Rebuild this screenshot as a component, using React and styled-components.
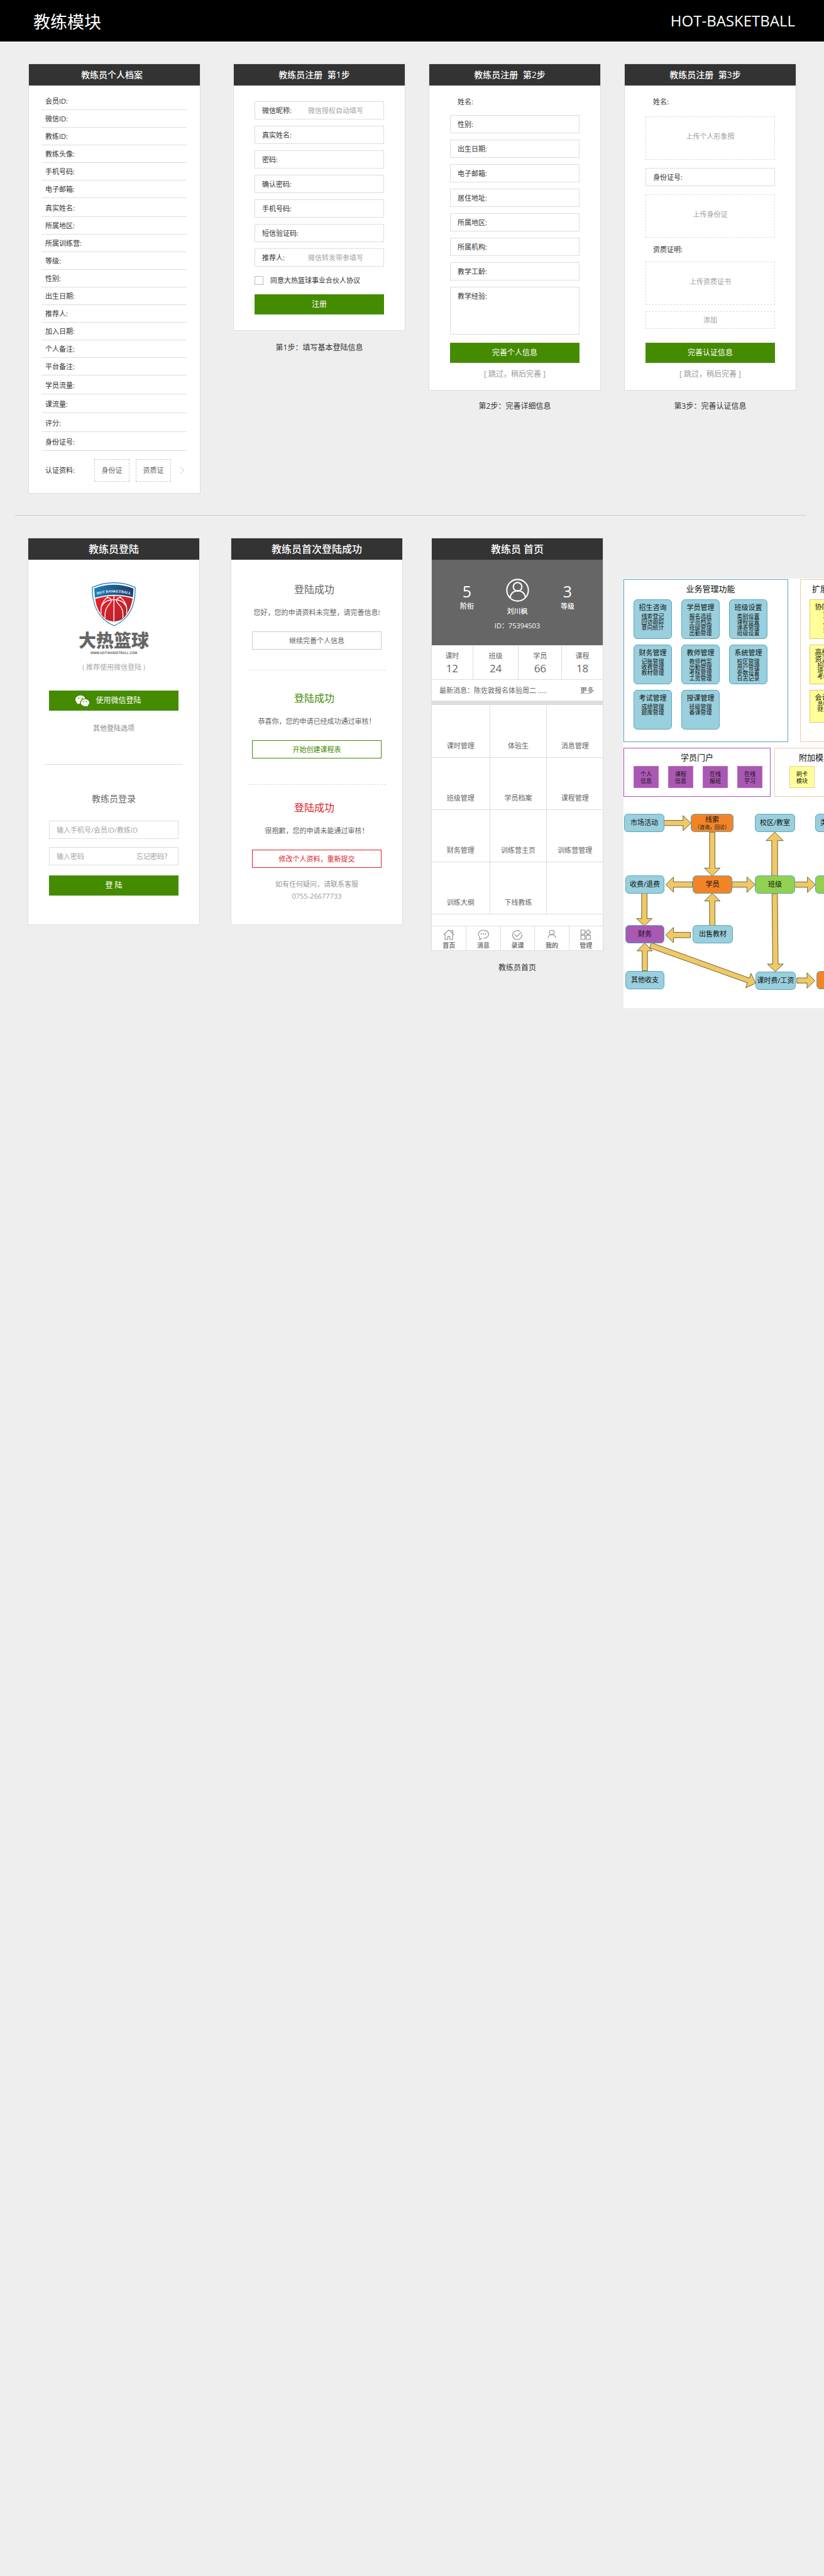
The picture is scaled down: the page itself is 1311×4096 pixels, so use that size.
import React from "react";
import styled, { createGlobalStyle, css } from "styled-components";
import { BsWechat } from "react-icons/bs";

const color = {
  page: "#eeeeee",
  line: "#dddddd",
  dark: "#333333",
  mid: "#666666",
  soft: "#999999",
  green: "#458b00",
  red: "#dd2229",
  teal: "#9acfdd",
  tealLine: "#58a8bd",
  purple: "#a958b3",
  yellow: "#feff99",
  orange: "#f28427",
  lime: "#92d14f",
};

const GlobalStyle = createGlobalStyle`
  *, *::before, *::after { box-sizing: border-box; }
  html, body { margin: 0; background: ${color.page}; }
  body {
    font-family: "Open Sans", "Noto Sans CJK SC", sans-serif;
    font-size: 11px;
    line-height: 16px;
    color: ${color.dark};
  }
  h1, h2, h3, p, ul, figure { margin: 0; padding: 0; font-weight: 400; }
  ul { list-style: none; }
  button, input, textarea { font: inherit; color: inherit; }
`;

const Page = styled.div`
  min-height: 100vh;
  overflow: hidden;
`;

const TopBar = styled.header`
  display: flex;
  justify-content: space-between;
  align-items: center;
  height: 66px;
  padding: 0 46px 0 53px;
  background: #000;
  color: #fff;
`;

const ModuleTitle = styled.h1`
  padding-top: 3px;
  font-size: 27px;
  line-height: 36px;
`;

const Brand = styled.span`
  font-size: 24px;
  line-height: 32px;
`;

const StepRow = styled.main`
  display: flex;
  align-items: flex-start;
  gap: 37px;
  padding: 35px 44px 0 45px;
`;

const Column = styled.figure`
  flex: 1 1 0;
  min-width: 0;
  margin-right: ${(p) => p.$after || 0}px;
`;

const Card = styled.section`
  background: #fff;
  border: 1px solid ${color.line};
`;

const CardHead = styled.h2`
  height: 34px;
  padding-right: ${(p) => p.$end || 0}px;
  background: ${color.dark};
  color: #fff;
  font-size: ${(p) => (p.$large ? 16 : 14)}px;
  font-weight: 500;
  line-height: 34px;
  text-align: center;
  white-space: pre;
`;

const Caption = styled.figcaption`
  margin-top: ${(p) => p.$gap || 17}px;
  font-size: 12px;
  line-height: 16px;
  text-align: center;
`;

/* ---------- profile card ---------- */

const Profile = styled.div`
  padding: 9px 21px 18px 20px;
`;

const ProfileRow = styled.label`
  display: flex;
  align-items: flex-end;
  height: ${(p) => (p.$tall ? 30 : 28)}px;
  padding: 0 0 5px 6px;
  border-bottom: 1px solid ${color.line};
`;

const BareInput = styled.input`
  flex: 1;
  min-width: 0;
  height: 16px;
  padding: 0;
  border: 0;
  outline: 0;
  background: transparent;
  &::placeholder {
    color: #a5a5a5;
    opacity: 1;
  }
`;

const Papers = styled.div`
  display: flex;
  align-items: center;
  gap: 10px;
  padding: 13px 4px 0 6px;
`;

const PapersLabel = styled.span`
  width: 68px;
`;

const PaperButton = styled.button`
  width: 56px;
  height: 36px;
  padding: 0;
  border: 1px dashed #c9c9dc;
  background: #fff;
  color: ${color.mid};
`;

const MoreButton = styled.button`
  display: flex;
  margin-left: auto;
  padding: 0;
  border: 0;
  background: none;
`;

/* ---------- forms ---------- */

const Form = styled.form`
  display: flex;
  flex-direction: column;
  gap: 10px;
  padding: ${(p) => p.$top}px 33px ${(p) => p.$bottom}px;
`;

const Field = styled.label`
  display: flex;
  align-items: center;
  height: 29px;
  padding: 0 11px;
  border: 1px solid ${color.line};
`;

const PlainField = styled(Field)`
  height: 18px;
  margin-bottom: ${(p) => p.$below || 0}px;
  border-color: transparent;
`;

const FieldName = styled.span`
  min-width: 73px;
`;

const AreaField = styled.label`
  display: flex;
  height: 76px;
  padding: 6px 11px;
  border: 1px solid ${color.line};
`;

const Area = styled.textarea`
  flex: 1;
  min-width: 0;
  padding: 0;
  border: 0;
  outline: 0;
  resize: none;
  background: transparent;
`;

const Agree = styled.label`
  display: flex;
  align-items: center;
  gap: 11px;
  margin-top: 4px;
`;

const Tick = styled.input`
  appearance: none;
  width: 14px;
  height: 14px;
  margin: 0;
  border: 1px solid #bbb;
  background: #fff;
  &:checked {
    background: ${color.green};
  }
`;

const PrimaryButton = styled.button`
  display: flex;
  align-items: center;
  justify-content: center;
  gap: 10px;
  width: 100%;
  height: 32px;
  margin-top: ${(p) => p.$gap || 0}px;
  padding: 0 ${(p) => p.$end || 0}px 0 0;
  border: 0;
  background: ${color.green};
  color: #fff;
  font-size: 12px;
`;

const Skip = styled.a`
  align-self: center;
  color: ${color.soft};
  font-size: 12px;
  text-decoration: none;
`;

const Upload = styled.button`
  height: ${(p) => (p.$small ? 28 : 69)}px;
  margin: ${(p) => p.$above || 0}px 0 ${(p) => p.$below || 0}px;
  padding: 0 0 ${(p) => (p.$small ? 0 : 5)}px;
  border: 1px dashed ${color.line};
  background: #fff;
  color: #a0a0a0;
`;

const Rule = styled.hr`
  height: 1px;
  margin: 34px 29px 35px 24px;
  border: 0;
  background: #cccccc;
`;

/* ---------- second row ---------- */

const ScreenRow = styled.div`
  display: flex;
  align-items: flex-start;
  padding-left: 44px;
`;

const Screen = styled.figure`
  flex: 274 1 0;
  min-width: 0;
  margin-right: ${(p) => p.$after}px;
`;

const Login = styled.div`
  display: flex;
  flex-direction: column;
  align-items: center;
  height: 580px;
  padding: 36px 33px 0;
`;

const Wordmark = styled.strong`
  margin-top: 5px;
  color: ${color.mid};
  font-size: 28px;
  font-weight: 900;
  line-height: 34px;
`;

const Site = styled.span`
  margin-top: -1px;
  color: ${color.mid};
  font-family: "Liberation Sans", sans-serif;
  font-size: 5px;
  font-weight: 700;
  line-height: 8px;
`;

const Tip = styled.p`
  margin-top: 11px;
  color: #aaa;
`;

const OtherLink = styled.a`
  margin-top: 20px;
  color: #8c8c8c;
  text-decoration: none;
`;

const Divider = styled.hr`
  align-self: stretch;
  margin: ${(p) => p.$top}px -7px ${(p) => p.$bottom}px;
  border: 0;
  border-top: 1px ${(p) => (p.$dashed ? "dashed" : "solid")} ${color.line};
`;

const LoginTitle = styled.h3`
  color: ${color.mid};
  font-size: 14px;
  line-height: 20px;
`;

const LoginBox = styled.div`
  display: flex;
  align-items: center;
  align-self: stretch;
  height: 29px;
  margin-top: ${(p) => p.$gap}px;
  padding: 0 11px;
  border: 1px solid ${color.line};
  a {
    color: #a0a0a0;
    text-decoration: none;
  }
`;

const Results = styled.div`
  display: flex;
  flex-direction: column;
  align-items: center;
  height: 580px;
  padding: 35px 33px 0;
  color: ${color.mid};
`;

const ResultTitle = styled.h3`
  padding-right: 8px;
  color: ${(p) => p.$tone};
  font-size: 16px;
  line-height: 24px;
`;

const ResultText = styled.p`
  margin: 17px 0 22px;
  white-space: nowrap;
`;

const OutlineButton = styled.button`
  width: 100%;
  height: 29px;
  padding: 0;
  border: 1px solid ${(p) => p.$edge || p.$tone};
  background: #fff;
  color: ${(p) => p.$tone};
`;

const Help = styled.p`
  margin-top: 16px;
  color: ${color.soft};
  line-height: 19px;
  text-align: center;
`;

/* ---------- home screen ---------- */

const Hero = styled.div`
  display: grid;
  grid-template-columns: repeat(3, 80px);
  justify-content: center;
  height: 136px;
  padding-top: 30px;
  background: ${color.mid};
  color: #fff;
  text-align: center;
`;

const Rank = styled.div`
  padding-top: 4px;
  font-weight: 500;
  strong {
    display: block;
    font-size: 25px;
    font-weight: 500;
    line-height: 32px;
  }
`;

const Person = styled.div`
  display: flex;
  flex-direction: column;
  align-items: center;
  gap: 7px;
  white-space: nowrap;
  svg {
    display: block;
  }
`;

const PersonName = styled.span`
  font-weight: 500;
`;

const Stats = styled.ul`
  display: grid;
  grid-template-columns: 65fr 73fr 69fr 66fr;
  border-bottom: 1px solid ${color.line};
`;

const Stat = styled.li`
  height: 54px;
  padding-top: 9px;
  color: ${color.mid};
  text-align: center;
  & + & {
    border-left: 1px solid ${color.line};
  }
  strong {
    display: block;
    font-size: 17px;
    font-weight: 500;
    line-height: 24px;
  }
`;

const News = styled.div`
  display: flex;
  justify-content: space-between;
  align-items: center;
  height: 33px;
  padding: 0 14px 0 12px;
  color: ${color.mid};
  a {
    color: inherit;
    text-decoration: none;
  }
`;

const MenuGrid = styled.ul`
  display: grid;
  grid-template-columns: 93fr 91fr 89fr;
  margin-bottom: 18px;
  padding-top: 1px;
  border-top: 7px solid ${color.line};
`;

const MenuCell = styled.li`
  display: flex;
  align-items: flex-end;
  justify-content: center;
  height: 83px;
  padding-bottom: 10px;
  border-bottom: 1px solid ${color.line};
  border-right: ${(p) => (p.$last ? "0" : `1px solid ${color.line}`)};
  color: ${color.mid};
`;

const TabBar = styled.nav`
  display: grid;
  grid-template-columns: repeat(5, 1fr);
  height: 39px;
  border-top: 1px solid ${color.line};
`;

const Tab = styled.a`
  display: flex;
  flex-direction: column;
  align-items: center;
  gap: 1px;
  padding-top: 5px;
  color: #777;
  font-size: 10px;
  font-weight: 700;
  line-height: 14px;
  text-decoration: none;
  & + & {
    border-left: 1px solid ${color.line};
  }
  svg {
    display: block;
    fill: none;
    stroke: #8c8c8c;
    stroke-width: 1.7;
  }
`;

/* ---------- system map ---------- */

const SystemMap = styled.section`
  flex: 319 1 0;
  min-width: 0;
  margin-top: 65px;
  padding-top: 1px;
  overflow: hidden;
  background: #fff;
  color: #111;
`;

const PanelRow = styled.div`
  display: flex;
  margin-bottom: ${(p) => p.$below || 0}px;
`;

const Panel = styled.div`
  flex: none;
  width: ${(p) => p.$w}px;
  height: ${(p) => p.$h}px;
  margin-right: ${(p) => p.$after || 0}px;
  padding: 6px 0 0 ${(p) => p.$inset}px;
  border: 1px solid ${(p) => p.$edge};
`;

const PanelTitle = styled.h3`
  padding-right: ${(p) => p.$end || 0}px;
  font-size: 13px;
  line-height: 16px;
  text-align: center;
`;

const Modules = styled.div`
  display: grid;
  grid-template-columns: repeat(3, 61px);
  gap: 9px 15px;
  margin-top: 9px;
`;

const Extras = styled.div`
  display: flex;
  flex-direction: column;
  gap: 9px;
  margin-top: 9px;
`;

const ModuleBox = styled.div`
  width: 61px;
  height: ${(p) => p.$h || 63}px;
  padding-top: 5px;
  border: 1px solid ${(p) => (p.$yellow ? "#e6c56c" : color.tealLine)};
  border-radius: ${(p) => (p.$yellow ? 0 : 6)}px;
  background: ${(p) => (p.$yellow ? color.yellow : color.teal)};
  text-align: center;
  h4 {
    margin: 0 0 ${(p) => (p.$yellow ? 0 : 3)}px;
    font-size: 11px;
    font-weight: 400;
    line-height: ${(p) => (p.$yellow ? 11 : 13)}px;
  }
  p {
    font-size: 9px;
    line-height: 9px;
  }
`;

const Chips = styled.div`
  display: flex;
  gap: 15px;
  margin-top: 6px;
`;

const Chip = styled.div`
  display: flex;
  flex-direction: column;
  justify-content: center;
  width: 40px;
  height: 35px;
  border: 1px solid ${(p) => (p.$yellow ? "#efcf9a" : "#b46ebd")};
  background: ${(p) => (p.$yellow ? color.yellow : color.purple)};
  font-size: 9px;
  line-height: 11px;
  text-align: center;
`;

const Flow = styled.div`
  position: relative;
  height: 336px;
  svg {
    display: block;
  }
`;

const Node = styled.div`
  position: absolute;
  left: ${(p) => p.$x}px;
  top: ${(p) => p.$y}px;
  display: flex;
  flex-direction: column;
  align-items: center;
  justify-content: center;
  width: ${(p) => p.$w || 64}px;
  height: 29px;
  padding-bottom: 1px;
  border: 1px solid ${color.tealLine};
  border-radius: 6px;
  background: ${(p) => p.$bg || color.teal};
  line-height: 12px;
  white-space: nowrap;
  ${(p) =>
    p.$start &&
    css`
      align-items: flex-start;
      padding-left: 7px;
    `}
  small {
    font-size: 8px;
    line-height: 11px;
  }
`;

const profileRows = [
  ["会员ID:", true],
  ["微信ID:"],
  ["教练ID:"],
  ["教练头像:"],
  ["手机号码:"],
  ["电子邮箱:"],
  ["真实姓名:", true],
  ["所属地区:"],
  ["所属训练营:"],
  ["等级:"],
  ["性别:"],
  ["出生日期:"],
  ["推荐人:"],
  ["加入日期:"],
  ["个人备注:"],
  ["平台备注:"],
  ["学员流量:", true],
  ["课流量:", true],
  ["评分:", true],
  ["身份证号:", true],
];

const stepOne = [
  ["微信昵称:", "微信授权自动填写"],
  ["真实姓名:"],
  ["密码:", "", "password"],
  ["确认密码:", "", "password"],
  ["手机号码:"],
  ["短信验证码:"],
  ["推荐人:", "微信转发带参填写"],
];

const stepTwo = ["性别:", "出生日期:", "电子邮箱:", "居住地址:", "所属地区:", "所属机构:", "教学工龄:"];

const menu = [
  "课时管理", "体验生", "消息管理",
  "班级管理", "学员档案", "课程管理",
  "财务管理", "训练营主页", "训练营管理",
  "训练大纲", "下线教练", "",
];

const modules = [
  ["招生咨询", ["线索登记", "回访跟踪", "意向统计"]],
  ["学员管理", ["报名选班", "学员档案", "班级管理", "出勤管理"]],
  ["班级设置", ["类别设置", "课程设置", "课表管理", "班级设置"]],
  ["财务管理", ["记账管理", "收费管理", "教材管理"]],
  ["教师管理", ["教师档案", "出勤管理", "考核管理", "工资管理"]],
  ["系统管理", ["校区管理", "用户管理", "参数设置", "日志记录"]],
  ["考试管理", ["成绩管理", "题库管理"]],
  ["授课管理", ["班级管理", "备课管理"]],
];

const arrows = [
  "M352 152H485V118L540 171L485 224V188H352Z",
  "M670 234H708V485H744L689 540L634 485H670Z",
  "M551 581H418V548L364 600L418 654V619H551Z",
  "M828 581H932V547L988 600L932 655V619H828Z",
  "M1105 538V293H1066L1126 233L1186 293H1146V538Z",
  "M1265 582H1355V547L1410 601L1355 655V619H1265Z",
  "M195 662V838H160L214 890L268 838H233V662Z",
  "M670 886V715H635L689 661L744 715H708V886Z",
  "M536 934H418V900L363 953L418 1007V972H536Z",
  "M199 1203V1064H163L217 1009L271 1064H236V1203Z",
  "M264 1007L949 1254L960 1221L993 1290L923 1322L935 1287L252 1043Z",
  "M1107 664L1112 1156H1075L1131 1209L1186 1156H1150L1145 664Z",
  "M1280 1253H1352V1217L1407 1272L1352 1325V1289H1280Z",
];

function Shield() {
  return (
    <svg width="70" height="70" viewBox="196 49 306 308" role="img" aria-label="HOT BASKETBALL">
      <defs>
        <linearGradient id="band" x1="0" x2="1">
          <stop offset="0" stopColor="#1b7fb8" />
          <stop offset="1" stopColor="#1f3f6b" />
        </linearGradient>
        <linearGradient id="ball" x1="0" x2="1" y2="1">
          <stop offset="0" stopColor="#ee1f28" />
          <stop offset="1" stopColor="#a9262c" />
        </linearGradient>
        <path id="arc" d="M222 138Q350 100 478 138" />
      </defs>
      <path
        d="M199 84Q270 52 350 52Q430 52 499 84C502 190 470 300 350 353C230 300 196 190 199 84Z"
        fill="#fff"
        stroke="#0f75b5"
        strokeWidth="5"
      />
      <path d="M212 92Q280 66 350 66Q420 66 487 92L483 152Q350 118 217 157Z" fill="url(#band)" />
      <path d="M219 166Q350 124 481 162C470 225 445 278 405 309Q350 338 295 309C252 275 228 225 219 166Z" fill="url(#ball)" />
      <g fill="none" stroke="#fff" strokeWidth="6">
        <path d="M350 140V325" />
        <path d="M300 158C330 150 340 178 322 196C296 222 282 250 288 300" />
        <path d="M400 158C370 150 360 178 378 196C406 222 418 250 412 300" />
        <path d="M310 148C272 178 252 215 262 268" />
        <path d="M390 148C428 178 448 215 438 268" />
        <path d="M262 222C275 190 300 170 350 170C400 170 425 190 438 222" />
      </g>
      <text fill="#fff" fontSize="26" fontWeight="700" fontFamily="Liberation Serif, serif" textAnchor="middle">
        <textPath href="#arc" startOffset="50%">HOT BASKETBALL</textPath>
      </text>
    </svg>
  );
}

const tabs = [
  ["首页", <path key="a" d="M1 13L13.5 1L26 13M18 2.500H23.500V10M4.500 12V24H11V17H16V24H23V12" />],
  ["消息", (
    <g key="b">
      <path d="M5 18.500A12.500 10 0 1 1 13.500 21.500M5 18L4.500 25L10.500 21.500" />
      <path d="M7.500 11h2M12.500 11h2M17.500 11h2" strokeWidth="3.500" />
    </g>
  )],
  ["录课", <path key="c" d="M20 4.500A11.300 11 0 1 0 24.500 11M7 12L12 17L24 6" />],
  ["我的", (
    <g key="d">
      <ellipse cx="13.500" cy="7" rx="6.300" ry="5.500" />
      <path d="M4 21C5 9.500 22 9.500 23 21" />
    </g>
  )],
  ["管理", <path key="e" d="M1.500 1.500H11.500V11H1.500ZM1.500 14H11.500V24H1.500ZM14.500 14H24.500V24H14.500ZM19.500 .5L25.500 6.500L19.500 12.500L13.500 6.500Z" />],
];

function Avatar() {
  return (
    <svg width="37" height="37" viewBox="0 0 54 54" fill="none" stroke="#fff" strokeWidth="3">
      <circle cx="27" cy="27" r="25" />
      <circle cx="27" cy="19" r="10" />
      <path d="M10 45A17.500 17 0 0 1 45 45" />
    </svg>
  );
}

function Entry({ name, hint, type }) {
  return (
    <Field>
      <FieldName>{name}</FieldName>
      <BareInput type={type || "text"} placeholder={hint} />
    </Field>
  );
}

function NameEntry() {
  return (
    <PlainField $below={2}>
      <FieldName>姓名:</FieldName>
      <BareInput />
    </PlainField>
  );
}

function Module({ title, items, ...rest }) {
  return (
    <ModuleBox {...rest}>
      {[].concat(title).map((t) => <h4 key={t}>{t}</h4>)}
      {items.map((item) => <p key={item}>{item}</p>)}
    </ModuleBox>
  );
}

function Steps() {
  return (
    <StepRow>
      <Column $after={15}>
        <Card>
          <CardHead $end={8}>教练员个人档案</CardHead>
          <Profile>
            {profileRows.map(([name, tall]) => (
              <ProfileRow key={name} $tall={tall}>
                <span>{name}</span>
                <BareInput />
              </ProfileRow>
            ))}
            <Papers>
              <PapersLabel>认证资料:</PapersLabel>
              <PaperButton type="button">身份证</PaperButton>
              <PaperButton type="button">资质证</PaperButton>
              <MoreButton type="button" aria-label="更多资料">
                <svg width="7" height="12" viewBox="0 0 7 12" fill="none" stroke="#c4c4c4">
                  <path d="M.5 .5L6.500 6L.5 11.500" />
                </svg>
              </MoreButton>
            </Papers>
          </Profile>
        </Card>
      </Column>

      <Column>
        <Card>
          <CardHead $end={16}>{"教练员注册  第1步"}</CardHead>
          <Form $top={25} $bottom={25}>
            {stepOne.map(([name, hint, type]) => (
              <Entry key={name} name={name} hint={hint} type={type} />
            ))}
            <Agree>
              <Tick type="checkbox" />
              同意大热篮球事业合伙人协议
            </Agree>
            <PrimaryButton type="button" $gap={4}>注册</PrimaryButton>
          </Form>
        </Card>
        <Caption $gap={19}>第1步：填写基本登陆信息</Caption>
      </Column>

      <Column>
        <Card>
          <CardHead $end={16}>{"教练员注册  第2步"}</CardHead>
          <Form $top={17} $bottom={17}>
            <NameEntry />
            {stepTwo.map((name) => <Entry key={name} name={name} />)}
            <AreaField>
              <FieldName>教学经验:</FieldName>
              <Area />
            </AreaField>
            <PrimaryButton type="button" $gap={3}>完善个人信息</PrimaryButton>
            <Skip href="#skip">[ 跳过，稍后完善 ]</Skip>
          </Form>
        </Card>
        <Caption>第2步：完善详细信息</Caption>
      </Column>

      <Column>
        <Card>
          <CardHead $end={16}>{"教练员注册  第3步"}</CardHead>
          <Form $top={17} $bottom={17}>
            <NameEntry />
            <Upload type="button" $above={2} $below={3}>上传个人形象照</Upload>
            <Entry name="身份证号:" />
            <Upload type="button" $above={3}>上传身份证</Upload>
            <PlainField as="div">资质证明:</PlainField>
            <Upload type="button">上传资质证书</Upload>
            <Upload type="button" $small $below={12}>添加</Upload>
            <PrimaryButton type="button">完善认证信息</PrimaryButton>
            <Skip href="#skip">[ 跳过，稍后完善 ]</Skip>
          </Form>
        </Card>
        <Caption>第3步：完善认证信息</Caption>
      </Column>
    </StepRow>
  );
}

function LoginScreen() {
  return (
    <Screen $after={49}>
      <Card>
        <CardHead $large>教练员登陆</CardHead>
        <Login>
          <Shield />
          <Wordmark>大热篮球</Wordmark>
          <Site>WWW.HOT-BASKETBALL.COM</Site>
          <Tip>( 推荐使用微信登陆 )</Tip>
          <PrimaryButton type="button" $gap={29} $end={17}>
            <BsWechat size={22} />
            使用微信登陆
          </PrimaryButton>
          <OtherLink href="#other">其他登陆选项</OtherLink>
          <Divider $top={49} $bottom={44} />
          <LoginTitle>教练员登录</LoginTitle>
          <LoginBox $gap={25}>
            <BareInput aria-label="账号" placeholder="输入手机号/会员ID/教练ID" />
          </LoginBox>
          <LoginBox $gap={13}>
            <BareInput type="password" aria-label="密码" placeholder="输入密码" />
            <a href="#forgot">忘记密码？</a>
          </LoginBox>
          <PrimaryButton type="button" $gap={16}>登 陆</PrimaryButton>
        </Login>
      </Card>
    </Screen>
  );
}

function ResultScreen() {
  return (
    <Screen $after={45}>
      <Card>
        <CardHead $large>教练员首次登陆成功</CardHead>
        <Results>
          <ResultTitle $tone={color.mid}>登陆成功</ResultTitle>
          <ResultText>您好，您的申请资料未完整，请完善信息!</ResultText>
          <OutlineButton $tone={color.mid} $edge="#cccccc">继续完善个人信息</OutlineButton>
          <Divider $dashed $top={32} $bottom={32} />
          <ResultTitle $tone={color.green}>登陆成功</ResultTitle>
          <ResultText>恭喜你，您的申请已经成功通过审核！</ResultText>
          <OutlineButton $tone={color.green}>开始创建课程表</OutlineButton>
          <Divider $dashed $top={41} $bottom={24} />
          <ResultTitle $tone={color.red}>登陆成功</ResultTitle>
          <ResultText>很抱歉，您的申请未能通过审核！</ResultText>
          <OutlineButton $tone={color.red}>修改个人资料，重新提交</OutlineButton>
          <Help>
            如有任何疑问，请联系客服
            <br />
            0755-26677733
          </Help>
        </Results>
      </Card>
    </Screen>
  );
}

function HomeScreen() {
  return (
    <Screen $after={32}>
      <Card>
        <CardHead $large>教练员 首页</CardHead>
        <Hero>
          <Rank><strong>5</strong>阶衔</Rank>
          <Person>
            <Avatar />
            <PersonName>刘川枫</PersonName>
            <span>ID：75394503</span>
          </Person>
          <Rank><strong>3</strong>等级</Rank>
        </Hero>
        <Stats>
          <Stat>课时<strong>12</strong></Stat>
          <Stat>班级<strong>24</strong></Stat>
          <Stat>学员<strong>66</strong></Stat>
          <Stat>课程<strong>18</strong></Stat>
        </Stats>
        <News>
          <span>最新消息：陈佐敦报名体验周二 .....</span>
          <a href="#more">更多</a>
        </News>
        <MenuGrid>
          {menu.map((name, i) => (
            <MenuCell key={i} $last={i % 3 === 2}>{name}</MenuCell>
          ))}
        </MenuGrid>
        <TabBar>
          {tabs.map(([name, icon]) => (
            <Tab key={name} href={"#" + name}>
              <svg width="18" height="17" viewBox="0 0 27 26">{icon}</svg>
              {name}
            </Tab>
          ))}
        </TabBar>
      </Card>
      <Caption $gap={19}>教练员首页</Caption>
    </Screen>
  );
}

function MapScreen() {
  return (
    <SystemMap>
      <PanelRow $below={9}>
        <Panel $w={262} $h={259} $inset={15} $after={19} $edge={color.tealLine}>
          <PanelTitle>业务管理功能</PanelTitle>
          <Modules>
            {modules.map(([title, items]) => (
              <Module key={title} title={title} items={items} />
            ))}
          </Modules>
        </Panel>
        <Panel $w={90} $h={259} $inset={14} $edge="#efcaa2">
          <PanelTitle $end={14}>扩展功能</PanelTitle>
          <Extras>
            <Module $yellow title="协同办公" items={["信息", "论坛", "任务", "流程"]} />
            <Module $yellow title={["高级人力", "资源管理"]} items={["招聘管理", "培训管理", "考核管理"]} />
            <Module $yellow $h={52} title="会计管理" items={["总帐管理", "财务报表"]} />
          </Extras>
        </Panel>
      </PanelRow>
      <PanelRow>
        <Panel $w={234} $h={78} $inset={15} $after={6} $edge={color.purple}>
          <PanelTitle $end={15}>学员门户</PanelTitle>
          <Chips>
            {[["个人", "信息"], ["课程", "信息"], ["在线", "报班"], ["在线", "学习"]].map(([a, b]) => (
              <Chip key={a + b}>
                <span>{a}</span>
                <span>{b}</span>
              </Chip>
            ))}
          </Chips>
        </Panel>
        <Panel $w={130} $h={78} $inset={23} $edge="#efcaa2">
          <PanelTitle $end={23}>附加模块</PanelTitle>
          <Chips>
            <Chip $yellow>
              <span>刷卡</span>
              <span>模块</span>
            </Chip>
          </Chips>
        </Panel>
      </PanelRow>
      <Flow>
        <svg width="319" height="336" viewBox="69 -13 1401 1477">
          <g fill="#f0c965" stroke="#2b2410" strokeWidth="3">
            {arrows.map((d) => <path key={d} d={d} />)}
          </g>
        </svg>
        <Node $x={1} $y={27}>市场活动</Node>
        <Node $x={107} $y={27} $w={68} $bg={color.orange}>
          线索
          <small>（咨询，回访）</small>
        </Node>
        <Node $x={209} $y={27}>校区/教室</Node>
        <Node $x={305} $y={27} $start>类别设置</Node>
        <Node $x={3} $y={125} $w={62}>收费/退费</Node>
        <Node $x={110} $y={125} $w={63} $bg={color.orange}>学员</Node>
        <Node $x={209} $y={125} $bg={color.lime}>班级</Node>
        <Node $x={305} $y={125} $bg={color.lime} />
        <Node $x={3} $y={204} $w={62} $bg={color.purple}>财务</Node>
        <Node $x={110} $y={204}>出售教材</Node>
        <Node $x={3} $y={277} $w={62}>其他收支</Node>
        <Node $x={210} $y={278}>课时费/工资</Node>
        <Node $x={307} $y={277} $bg={color.orange} />
      </Flow>
    </SystemMap>
  );
}

export default function App() {
  return (
    <Page>
      <GlobalStyle />
      <TopBar>
        <ModuleTitle>教练模块</ModuleTitle>
        <Brand>HOT-BASKETBALL</Brand>
      </TopBar>
      <Steps />
      <Rule />
      <ScreenRow>
        <LoginScreen />
        <ResultScreen />
        <HomeScreen />
        <MapScreen />
      </ScreenRow>
    </Page>
  );
}
